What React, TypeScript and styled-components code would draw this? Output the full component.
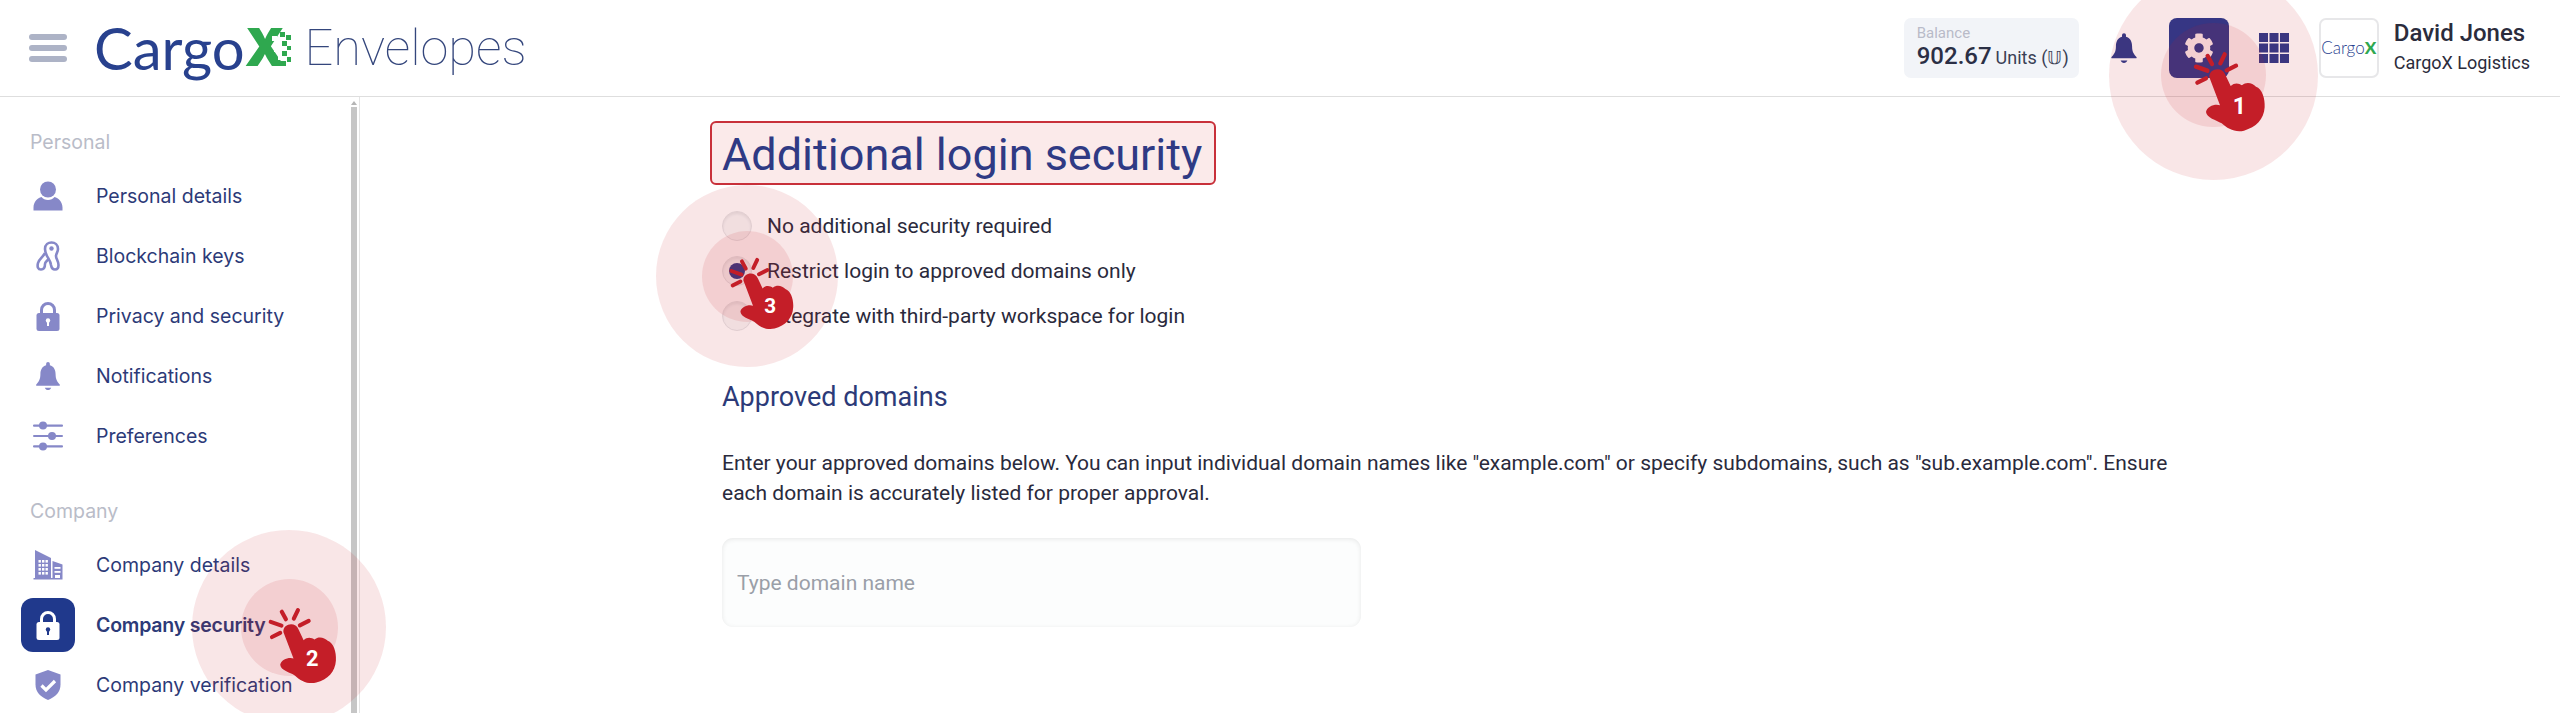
import React from 'react'
import styled, { createGlobalStyle } from 'styled-components'
import { FaCog } from 'react-icons/fa'

const GlobalStyle = createGlobalStyle`
  html, body {
    margin: 0;
    padding: 0;
    background: #fff;
    font-family: Roboto, "Liberation Sans", sans-serif;
  }
  * { box-sizing: border-box; }
`

const Page = styled.div`
  position: relative;
  width: 2560px;
  height: 713px;
  overflow: hidden;
  display: flex;
  flex-direction: column;
`

const Header = styled.header`
  height: 97px;
  flex: none;
  display: flex;
  align-items: center;
  justify-content: space-between;
  padding: 0 30px 1px 29px;
  border-bottom: 1px solid #dedede;
`

const HeaderLeft = styled.div`
  display: flex;
  align-items: center;
`

const Burger = styled.div`
  width: 38px;
  display: flex;
  flex-direction: column;
  gap: 5px;
  margin-right: 27px;
  span {
    display: block;
    height: 6px;
    border-radius: 3px;
    background: #adb3c6;
  }
`

const Logo = styled.div`
  display: flex;
  align-items: center;
  height: 60px;
`

const LogoCargo = styled.span`
  font-family: Lato, sans-serif;
  font-size: 58px;
  line-height: 60px;
  color: #28418e;
`

const LogoX = styled.span`
  position: relative;
  font-family: Inter, sans-serif;
  font-weight: 900;
  font-size: 52px;
  line-height: 60px;
  color: #2fa84f;
  svg {
    position: absolute;
    right: -6px;
    top: 14px;
  }
`

const Product = styled.span`
  font-family: Roboto, sans-serif;
  font-weight: 100;
  font-size: 50.5px;
  line-height: 60px;
  color: #34467c;
  margin-left: 19px;
`

const HeaderRight = styled.div`
  display: flex;
  align-items: center;
  gap: 15px;
`

const Balance = styled.div`
  width: 175px;
  height: 60px;
  border-radius: 7px;
  background: #f2f4f8;
  padding: 6px 13px;
`

const BalanceLabel = styled.div`
  font-size: 15px;
  line-height: 18px;
  color: #b9bbc8;
`

const BalanceRow = styled.div`
  display: flex;
  align-items: baseline;
  gap: 4px;
  line-height: 28px;
  white-space: nowrap;
`

const BalanceValue = styled.span`
  font-size: 24px;
  font-weight: 500;
  color: #2b2f45;
`

const BalanceUnit = styled.span`
  font-size: 18px;
  color: #3a3f55;
`

const IconButton = styled.div<{ $active?: boolean }>`
  width: 60px;
  height: 60px;
  display: flex;
  align-items: center;
  justify-content: center;
  border-radius: 8px;
  color: ${(p) => (p.$active ? '#ffffff' : '#2a3a8c')};
  background: ${(p) => (p.$active ? '#243a90' : 'transparent')};
`

const Avatar = styled.div`
  width: 60px;
  height: 60px;
  border: 2px solid #e7e7e9;
  border-radius: 7px;
  display: flex;
  align-items: center;
  justify-content: center;
  font-family: Lato, sans-serif;
  font-weight: 300;
  font-size: 17px;
  color: #28418e;
  span {
    color: #2fa84f;
    font-weight: 900;
  }
`

const User = styled.div`
  display: flex;
  flex-direction: column;
  white-space: nowrap;
`

const UserName = styled.div`
  font-size: 24px;
  line-height: 30px;
  font-weight: 500;
  color: #2b2c3c;
`

const UserCompany = styled.div`
  font-size: 18px;
  line-height: 30px;
  color: #2b2c3c;
`

const Body = styled.div`
  flex: 1;
  display: flex;
  min-height: 0;
`

const Sidebar = styled.aside`
  position: relative;
  width: 360px;
  flex: none;
  padding: 30px 0 0 21px;
  border-right: 1px solid #e4e4e4;
  overflow: hidden;
`

const ScrollThumb = styled.div`
  position: absolute;
  top: 10px;
  bottom: 0;
  right: 2px;
  width: 6px;
  background: #c6c6c6;
  &::before {
    content: '';
    position: absolute;
    top: -6px;
    left: 0;
    border-left: 3px solid transparent;
    border-right: 3px solid transparent;
    border-bottom: 4px solid #b5b5b5;
  }
`

const SectionLabel = styled.div`
  font-family: Inter, sans-serif;
  font-size: 19.5px;
  line-height: 30px;
  color: #b9bcc8;
  padding-left: 9px;
  margin-bottom: 9px;
`

const NavGroup = styled.div`
  margin-bottom: 30px;
`

const NavRow = styled.div<{ $active?: boolean }>`
  display: flex;
  align-items: center;
  height: 60px;
  gap: 21px;
  font-family: Inter, sans-serif;
  font-size: 19.5px;
  font-weight: ${(p) => (p.$active ? 600 : 400)};
  letter-spacing: ${(p) => (p.$active ? '-0.2px' : '0')};
  color: #2c3a78;
  white-space: nowrap;
`

const NavIcon = styled.div<{ $active?: boolean }>`
  width: 54px;
  height: 54px;
  flex: none;
  display: flex;
  align-items: center;
  justify-content: center;
  border-radius: 12px;
  color: ${(p) => (p.$active ? '#ffffff' : '#8688c8')};
  background: ${(p) => (p.$active ? '#20398c' : 'transparent')};
`

const Main = styled.main`
  flex: 1;
  padding: 24px 0 0 362px;
`

const TitleBox = styled.div`
  display: inline-block;
  height: 64px;
  margin-left: -12px;
  padding: 0 12px 0 10px;
  border: 2px solid #c8303a;
  border-radius: 6px;
  background: #fbeaea;
`

const Title = styled.h1`
  margin: 0;
  font-size: 45px;
  font-weight: 400;
  line-height: 64px;
  color: #2f3a84;
  white-space: nowrap;
`

const RadioList = styled.div`
  display: flex;
  flex-direction: column;
  margin-top: 18px;
`

const RadioRow = styled.label`
  display: flex;
  align-items: center;
  height: 45px;
  gap: 15px;
  font-size: 21px;
  color: #2a2a3c;
`

const RadioCircle = styled.span<{ $checked?: boolean }>`
  width: 30px;
  height: 30px;
  border-radius: 50%;
  display: flex;
  align-items: center;
  justify-content: center;
  background: #f6f6f7;
  border: 1px solid #e4e4e6;
  box-shadow: inset 0 2px 3px rgba(0, 0, 0, 0.07);
  &::after {
    content: '';
    width: 16px;
    height: 16px;
    border-radius: 50%;
    background: ${(p) => (p.$checked ? '#2f3a8a' : 'transparent')};
  }
`

const SubTitle = styled.h2`
  margin: 41px 0 0;
  font-size: 27px;
  font-weight: 400;
  line-height: 36px;
  color: #2c3a78;
`

const Paragraph = styled.p`
  width: 1460px;
  margin: 33px 0 0;
  font-size: 21px;
  line-height: 30px;
  color: #2a2a3c;
`

const DomainInput = styled.div`
  width: 639px;
  height: 89px;
  margin-top: 30px;
  padding: 0 15px;
  display: flex;
  align-items: center;
  border-radius: 11px;
  background: #fcfdfd;
  box-shadow: inset 0 1px 5px rgba(0, 0, 0, 0.09);
  font-size: 21px;
  color: #9a9fa8;
`

// click hint, sits over the page at the spot it points to
const Marker = styled.div<{ $x: number; $y: number }>`
  position: absolute;
  left: ${(p) => p.$x}px;
  top: ${(p) => p.$y}px;
  width: 0;
  height: 0;
`

const Halo = styled.div<{ $r: number }>`
  position: absolute;
  left: ${(p) => -p.$r}px;
  top: ${(p) => -p.$r}px;
  width: ${(p) => p.$r * 2}px;
  height: ${(p) => p.$r * 2}px;
  border-radius: 50%;
  background: rgba(200, 30, 40, 0.11);
`

const HandBox = styled.div<{ $dx: number; $dy: number; $scale: number }>`
  position: absolute;
  left: ${(p) => p.$dx - 28.3 * p.$scale}px;
  top: ${(p) => p.$dy - 23.3 * p.$scale}px;
  width: ${(p) => 80 * p.$scale}px;
  height: ${(p) => 83.3 * p.$scale}px;
  svg {
    display: block;
    width: 100%;
    height: 100%;
  }
`

const HandNumber = styled.span<{ $scale: number }>`
  position: absolute;
  left: 62%;
  top: 67%;
  transform: translate(-50%, -50%);
  color: #fff;
  font-weight: 700;
  font-size: ${(p) => 23 * p.$scale}px;
  line-height: 1;
`

const Hand = ({ n, x, y, r, dx, dy, scale }: { n: number; x: number; y: number; r: number; dx: number; dy: number; scale: number }) => (
  <Marker $x={x} $y={y}>
    <Halo $r={r} />
    <Halo $r={r / 2} />
    <HandBox $dx={dx} $dy={dy} $scale={scale}>
      <svg viewBox="150 130 240 250">
        <path
          fill="#c41e28"
          d="M208 212C206 186 246 178 256 204L272 238C284 226 298 230 306 236C320 224 338 230 348 240C366 246 376 275 374 302C372 338 348 362 312 372C285 378 262 366 245 350C228 340 200 334 198 316C200 298 228 290 240 296Z"
        />
        <g stroke="#c41e28" strokeWidth="13" strokeLinecap="round">
          <line x1="203" y1="148" x2="216" y2="172" />
          <line x1="254" y1="143" x2="241" y2="170" />
          <line x1="288" y1="177" x2="260" y2="191" />
          <line x1="168" y1="180" x2="202" y2="192" />
          <line x1="172" y1="228" x2="198" y2="215" />
        </g>
      </svg>
      <HandNumber $scale={scale}>{n}</HandNumber>
    </HandBox>
  </Marker>
)

const UserIcon = () => (
  <svg width="30" height="30" viewBox="0 0 30 30" fill="currentColor">
    <circle cx="15" cy="8.500" r="8" />
    <path d="M0.500 29.500v-3c0-5.500 4-9.500 8-10.500 1.500 2 3.800 3 6.500 3s5-1 6.500-3c4 1 8 5 8 10.500v3z" />
  </svg>
)

const KeysIcon = () => (
  <svg width="30" height="30" viewBox="0 0 30 30" fill="none" stroke="currentColor" strokeWidth="2.600">
    <path d="M12 8C12 3.500 15.500 1.500 18.500 1.500C22 1.500 25 4 25 8C25 11 23 12.500 23 15C23 18 25.500 20 25.500 24C25.500 27 24 28.500 22 28.500C20 28.500 18.500 27 18 24C17.500 20 15.500 18 14 15C13 13 12 11 12 8Z" />
    <circle cx="18.500" cy="7.500" r="2.200" fill="currentColor" stroke="none" />
    <path d="M12 12C11 15 6 18 5 22C4 26 5 28.500 8 28.500C11 28.500 12 26 12 23C12 21 14 20 15.500 18" />
  </svg>
)

const LockIcon = () => (
  <svg width="30" height="30" viewBox="0 0 30 30">
    <path fill="none" stroke="currentColor" strokeWidth="3" d="M8.500 14V9a6.500 6.500 0 0 1 13 0v5" />
    <rect x="3.500" y="12" width="23" height="18" rx="2.500" fill="currentColor" />
    <circle cx="15" cy="19.500" r="2.200" fill="var(--hole)" />
    <rect x="14" y="20" width="2" height="5" fill="var(--hole)" />
  </svg>
)

const BellIcon = ({ size = 32 }: { size?: number }) => (
  <svg width={size} height={size} viewBox="0 0 24 24" fill="currentColor">
    <path d="M12 1.500a1.400 1.400 0 0 1 1.400 1.400v1.100c2.900.8 4.300 3.300 4.300 6.700 0 4 1.300 5.600 3.100 7.600.3.400.1 1-.4 1H3.600c-.5 0-.7-.6-.4-1C5 16.300 6.300 14.700 6.300 10.700c0-3.400 1.400-5.900 4.300-6.700V2.900A1.400 1.400 0 0 1 12 1.500zM9.600 20.800h4.800c-.5 1.200-1.300 1.700-2.400 1.700s-1.900-.5-2.400-1.700z" />
  </svg>
)

const SlidersIcon = () => (
  <svg width="30" height="30" viewBox="0 0 30 30" fill="currentColor">
    <rect x="0" y="3.500" width="30" height="2.200" rx="1" />
    <rect x="0" y="13.900" width="30" height="2.200" rx="1" />
    <rect x="0" y="24.300" width="30" height="2.200" rx="1" />
    <circle cx="10" cy="4.500" r="4" />
    <circle cx="19" cy="15" r="4" />
    <circle cx="10" cy="25.500" r="4" />
  </svg>
)

const BuildingIcon = () => (
  <svg width="30" height="30" viewBox="0 0 30 30">
    <path fill="currentColor" d="M2 0l16 8v20H2zM19.500 11l10 3.500V28h-10zM0.500 28h29v1.500H.5z" />
    <g fill="#fff">
      {[10, 14, 18, 22].map((y) =>
        [5.500, 9, 12.500].map((x) => <rect key={`${x}-${y}`} x={x} y={y} width="2.400" height="2.600" />)
      )}
      {[17, 21].map((y) => <rect key={y} x="21.500" y={y} width="6" height="1.800" />)}
      <rect x="22" y="25" width="5" height="3" />
    </g>
  </svg>
)

const ShieldIcon = () => (
  <svg width="30" height="30" viewBox="0 0 30 30">
    <path fill="currentColor" d="M15 0l12.500 4.500v10c0 7.500-5 12.500-12.500 15.500C7.500 27 2.500 22 2.500 14.500v-10z" />
    <path fill="none" stroke="#fff" strokeWidth="3.200" d="M8.500 15.500l4.500 4.500 9-9" />
  </svg>
)

const GridIcon = () => (
  <svg width="30" height="30" viewBox="0 0 30 30" fill="currentColor">
    {[0, 10.500, 21].map((y) =>
      [0, 10.500, 21].map((x) => <rect key={`${x}-${y}`} x={x} y={y} width="9" height="9" />)
    )}
  </svg>
)

const LockHole = styled.div<{ $hole: string }>`
  display: flex;
  --hole: ${(p) => p.$hole};
`

const personal = [
  { label: 'Personal details', icon: <UserIcon /> },
  { label: 'Blockchain keys', icon: <KeysIcon /> },
  { label: 'Privacy and security', icon: <LockHole $hole="#fff"><LockIcon /></LockHole> },
  { label: 'Notifications', icon: <BellIcon /> },
  { label: 'Preferences', icon: <SlidersIcon /> },
]

const company = [
  { label: 'Company details', icon: <BuildingIcon /> },
  { label: 'Company security', icon: <LockHole $hole="#20398c"><LockIcon /></LockHole>, active: true },
  { label: 'Company verification', icon: <ShieldIcon /> },
]

const radios = [
  { label: 'No additional security required' },
  { label: 'Restrict login to approved domains only', checked: true },
  { label: 'Integrate with third-party workspace for login' },
]

export default function App() {
  return (
    <Page>
      <GlobalStyle />
      <Header>
        <HeaderLeft>
          <Burger>
            <span />
            <span />
            <span />
          </Burger>
          <Logo>
            <LogoCargo>Cargo</LogoCargo>
            <LogoX>
              X
              <svg width="20" height="34" viewBox="0 0 20 34">
                <g fill="#fff">
                  <rect x="0" y="4" width="5" height="5" />
                  <rect x="6" y="10" width="4" height="4" />
                  <rect x="2" y="16" width="5" height="4" />
                  <rect x="6" y="24" width="5" height="4" />
                </g>
                <g fill="#2fa84f">
                  <rect x="8" y="0" width="5" height="5" />
                  <rect x="14" y="3" width="5" height="5" />
                  <rect x="10" y="9" width="5" height="5" />
                  <rect x="15" y="14" width="4" height="4" />
                  <rect x="10" y="19" width="5" height="5" />
                  <rect x="15" y="25" width="4" height="5" />
                  <rect x="9" y="29" width="5" height="5" />
                </g>
              </svg>
            </LogoX>
            <Product>Envelopes</Product>
          </Logo>
        </HeaderLeft>
        <HeaderRight>
          <Balance>
            <BalanceLabel>Balance</BalanceLabel>
            <BalanceRow>
              <BalanceValue>902.67</BalanceValue>
              <BalanceUnit>Units (𝕌)</BalanceUnit>
            </BalanceRow>
          </Balance>
          <IconButton>
            <BellIcon size={34} />
          </IconButton>
          <IconButton $active>
            <FaCog size={30} />
          </IconButton>
          <IconButton>
            <GridIcon />
          </IconButton>
          <Avatar>
            Cargo<span>X</span>
          </Avatar>
          <User>
            <UserName>David Jones</UserName>
            <UserCompany>CargoX Logistics</UserCompany>
          </User>
        </HeaderRight>
      </Header>
      <Body>
        <Sidebar>
          <ScrollThumb />
          <SectionLabel>Personal</SectionLabel>
          <NavGroup>
            {personal.map((item) => (
              <NavRow key={item.label}>
                <NavIcon>{item.icon}</NavIcon>
                {item.label}
              </NavRow>
            ))}
          </NavGroup>
          <SectionLabel>Company</SectionLabel>
          <NavGroup>
            {company.map((item) => (
              <NavRow key={item.label} $active={item.active}>
                <NavIcon $active={item.active}>{item.icon}</NavIcon>
                {item.label}
              </NavRow>
            ))}
          </NavGroup>
        </Sidebar>
        <Main>
          <TitleBox>
            <Title>Additional login security</Title>
          </TitleBox>
          <RadioList>
            {radios.map((r) => (
              <RadioRow key={r.label}>
                <RadioCircle $checked={r.checked} />
                {r.label}
              </RadioRow>
            ))}
          </RadioList>
          <SubTitle>Approved domains</SubTitle>
          <Paragraph>
            Enter your approved domains below. You can input individual domain names like "example.com" or specify subdomains, such as "sub.example.com". Ensure each domain is accurately listed for proper approval.
          </Paragraph>
          <DomainInput>Type domain name</DomainInput>
        </Main>
      </Body>
      <Hand n={1} x={2213.5} y={75} r={104.5} dx={4.5} dy={-2} scale={1} />
      <Hand n={2} x={289} y={627} r={97} dx={3} dy={1} scale={0.95} />
      <Hand n={3} x={747} y={276} r={91} dx={4} dy={1} scale={0.9} />
    </Page>
  )
}
